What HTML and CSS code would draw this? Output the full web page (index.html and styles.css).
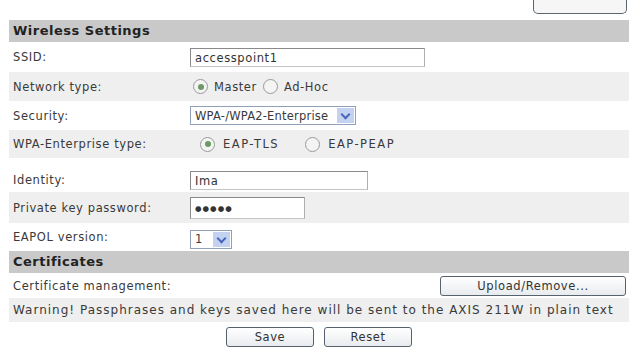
FILE: index.html
```html
<!DOCTYPE html>
<html lang="en">
<head>
    <meta charset="UTF-8">
    <title>Wireless Settings</title>
    <link rel="stylesheet" href="styles.css">
</head>
<body>
    <div class="top-bar">
        <span class="top-button"></span>
    </div>

    <div class="panel">
        <div class="section-head">Wireless Settings</div>

        <div class="row r-ssid">
            <span class="label">SSID:</span>
            <span class="field ssid">accesspoint1</span>
        </div>

        <div class="row alt r-net">
            <span class="label">Network type:</span>
            <span class="choices">
                <span class="radio checked"></span><span class="opt">Master</span>
                <span class="radio"></span><span class="opt">Ad-Hoc</span>
            </span>
        </div>

        <div class="row r-sec">
            <span class="label">Security:</span>
            <span class="select sec">WPA-/WPA2-Enterprise<span class="arrow"></span></span>
        </div>

        <div class="row alt r-wpa">
            <span class="label">WPA-Enterprise type:</span>
            <span class="choices eap">
                <span class="radio checked"></span><span class="opt tls">EAP-TLS</span>
                <span class="radio"></span><span class="opt">EAP-PEAP</span>
            </span>
        </div>

        <div class="row r-id">
            <span class="label">Identity:</span>
            <span class="field ident">Ima</span>
        </div>

        <div class="row alt r-key">
            <span class="label">Private key password:</span>
            <span class="field pass">&#9679;&#9679;&#9679;&#9679;&#9679;</span>
        </div>

        <div class="row r-eapol">
            <span class="label">EAPOL version:</span>
            <span class="select eapol">1<span class="arrow"></span></span>
        </div>

        <div class="section-head">Certificates</div>

        <div class="row r-cert">
            <span class="label">Certificate management:</span>
            <span class="btn upload">Upload/Remove...</span>
        </div>

        <div class="row alt r-warn">
            <span class="warn">Warning! Passphrases and keys saved here will be sent to the AXIS 211W in plain text</span>
        </div>

        <div class="actions">
            <span class="btn save">Save</span>
            <span class="btn reset">Reset</span>
        </div>
    </div>
</body>
</html>
```

FILE: styles.css
```css
body {
    margin: 0;
    background: #fff;
    font-family: "DejaVu Sans", Verdana, sans-serif;
    font-size: 11.5px;
    letter-spacing: 0.6px;
    color: #3a3a3a;
}
.top-bar {
    height: 20px;
    display: flex;
    justify-content: flex-end;
    padding-right: 7px;
}
.top-button {
    width: 92px;
    height: 15px;
    margin-top: -2px;
    border: 1px solid #5c6670;
    border-top: none;
    border-radius: 0 0 5px 5px;
    background: #f6f6f6;
}
.panel {
    margin-left: 9px;
    width: 620px;
}
.section-head {
    height: 22px;
    line-height: 22px;
    padding-left: 4px;
    background: #c9c9c9;
    font-weight: bold;
    font-size: 13px;
    letter-spacing: 0.5px;
    color: #222;
}
.row {
    display: grid;
    grid-template-columns: 177px 1fr;
    align-items: center;
    padding-left: 4px;
}
.row.alt {
    background: #efefef;
}
.r-ssid { height: 30px; }
.r-net { height: 29px; }
.r-sec { height: 29px; }
.r-wpa { height: 28px; }
.r-id { height: 24px; padding-top: 10px; }
.r-key { height: 31px; }
.r-eapol { height: 28px; }
.r-cert { height: 25px; }
.r-warn { height: 24px; display: flex; }

.field {
    height: 19px;
    line-height: 19px;
    border: 1px solid #8a8a8a;
    border-right-color: #b0b0b0;
    border-bottom-color: #c4c4c4;
    background: #fff;
    padding-left: 4px;
    box-sizing: border-box;
    color: #333;
}
.ssid { width: 235px; }
.ident { width: 178px; }
.pass {
    width: 115px;
    height: 22px;
    line-height: 21px;
    font-size: 7.5px;
    letter-spacing: 1px;
}

.select {
    display: flex;
    align-items: center;
    justify-content: space-between;
    height: 19px;
    border: 1px solid #8fa0b8;
    background: #fff;
    padding-left: 4px;
    box-sizing: border-box;
    letter-spacing: 0.2px;
}
.sec { width: 166px; }
.eapol { width: 42px; margin-top: 4px; }
.arrow {
    width: 17px;
    height: 15px;
    margin-right: 1px;
    background: #c4d2f2;
    position: relative;
}
.arrow::after {
    content: "";
    position: absolute;
    left: 5px;
    top: 3px;
    width: 5px;
    height: 5px;
    border-right: 2px solid #4a66b8;
    border-bottom: 2px solid #4a66b8;
    transform: rotate(45deg);
}

.choices {
    display: flex;
    align-items: center;
    padding-left: 3px;
}
.radio {
    width: 13px;
    height: 13px;
    border: 1px solid #9a9a9a;
    border-radius: 50%;
    background: #f4f4f4;
    position: relative;
    margin-right: 6px;
}
.radio.checked::after {
    content: "";
    position: absolute;
    left: 3.5px;
    top: 3.5px;
    width: 6px;
    height: 6px;
    border-radius: 50%;
    background: #6c9a64;
}
.opt {
    margin-right: 6px;
}
.eap {
    padding-left: 10px;
    font-size: 11.5px;
    letter-spacing: 1.5px;
}
.eap .radio {
    margin-right: 8px;
}
.eap .tls {
    margin-right: 26px;
}

.btn {
    display: inline-flex;
    justify-content: center;
    align-items: center;
    height: 20px;
    border: 1px solid #56626e;
    border-radius: 3px;
    background: linear-gradient(#ffffff, #e8ebef);
    box-sizing: border-box;
    color: #333;
}
.upload {
    width: 186px;
    justify-self: end;
    margin-right: 3px;
}
.warn {
    white-space: nowrap;
    font-size: 12px;
    letter-spacing: 1px;
}
.actions {
    display: flex;
    justify-content: center;
    gap: 10px;
    padding-top: 5px;
}
.save, .reset {
    width: 88px;
}
```
